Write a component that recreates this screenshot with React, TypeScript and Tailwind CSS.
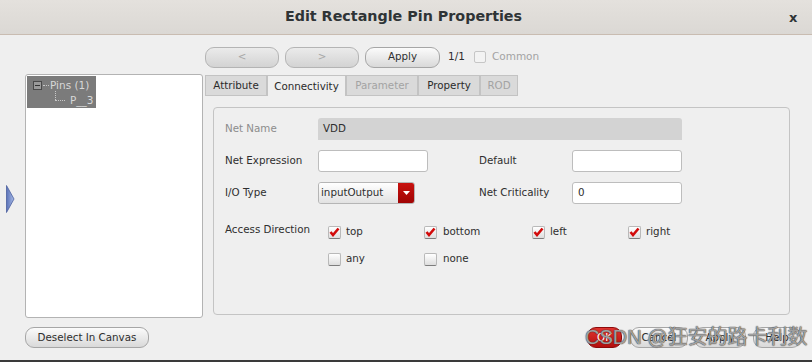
import React from 'react';

function Check({ checked }: { checked?: boolean }) {
    return (
        <span className="w-[13px] h-[13px] rounded-[2px] border border-[#b9b9b9] border-b-[#7d7d7d] bg-gradient-to-b from-[#ffffff] to-[#dedede] flex items-center justify-center shrink-0">
            {checked && (
                <svg width="11" height="10" viewBox="0 0 11 10">
                    <path d="M1.5 5 L4 8 L9.5 1.5" fill="none" stroke="#d20a0a" strokeWidth="2.6" strokeLinejoin="miter" />
                </svg>
            )}
        </span>
    );
}

function Btn({ label, w, disabled, red }: { label: string; w: string; disabled?: boolean; red?: boolean }) {
    return (
        <div
            className={`${w} h-[21px] rounded-[9px] border flex items-center justify-center shrink-0 ${
                red
                    ? 'bg-gradient-to-b from-[#e0332f] to-[#b40d0d] border-[#8d0a0a] text-white'
                    : disabled
                    ? 'bg-gradient-to-b from-[#ebebeb] to-[#d3d3d3] border-[#b4b4b4] text-[#a8a8a8]'
                    : 'bg-gradient-to-b from-[#fbfbfb] to-[#d9d9d9] border-[#a6a6a6] text-[#2e2e2e]'
            }`}
        >
            {label}
        </div>
    );
}

function Field({ w, value, gray }: { w: string; value?: string; gray?: boolean }) {
    return (
        <div
            className={`${w} h-[22px] flex items-center pl-[5px] shrink-0 ${
                gray ? 'bg-[#d3d3d3] rounded-t-[3px]' : 'bg-white border border-[#bdbdbd] rounded-[3px]'
            }`}
        >
            {value}
        </div>
    );
}

function Tab({ label, w, active, disabled }: { label: string; w: string; active?: boolean; disabled?: boolean }) {
    return (
        <div
            className={`${w} h-[21px] flex items-center justify-center pt-[1px] border border-[#c3c3c3] ${
                active ? 'bg-[#efefef] border-b-0' : 'bg-[#dadada]'
            } ${disabled ? 'text-[#a3a3a3]' : 'text-[#2a2a2a]'}`}
        >
            {label}
        </div>
    );
}

export default function App() {
    return (
        <div className="w-[812px] h-[362px] bg-[#efefef] flex flex-col overflow-hidden relative font-['DejaVu_Sans',sans-serif] text-[10.3px] text-[#2e2e2e]">
            {/* title bar */}
            <div className="h-[35px] shrink-0 bg-gradient-to-b from-[#e4e1dd] to-[#dbd8d4] border-b border-[#c9bcb1] flex items-center relative">
                <div className="flex-1 text-center text-[14.3px] font-bold text-[#2f3436] pr-[5px]">
                    Edit Rectangle Pin Properties
                </div>
                <div className="absolute left-[789px] top-[8px] text-[13px] font-bold text-[#2f3436]">x</div>
            </div>

            <div className="flex flex-1">
                {/* side handle */}
                <div className="w-[25px] shrink-0 pt-[150px] pl-[6px]">
                    <svg width="9" height="28" viewBox="0 0 9 28">
                        <defs>
                            <linearGradient id="tri" x1="0" x2="1" y1="0" y2="0">
                                <stop offset="0" stopColor="#5a72b8" />
                                <stop offset="1" stopColor="#a9bbe6" />
                            </linearGradient>
                        </defs>
                        <path d="M0.5 0.5 L8 14 L0.5 27.5 Z" fill="url(#tri)" stroke="#4b5f9e" strokeWidth="0.8" />
                    </svg>
                </div>

                {/* tree column */}
                <div className="w-[178px] shrink-0 pt-[39px] flex flex-col">
                    <div className="h-[244px] bg-white border border-[#b3b3b3] rounded-[3px] pt-[1px] pl-[1px]">
                        <div className="w-[69px] h-[32px] bg-[#7b7b7b] text-[#d8d8d8] relative">
                            <div className="absolute left-[6px] top-[5px] w-[9px] h-[9px] border border-[#4a4a4a] bg-[#9a9a9a] flex items-center justify-center">
                                <div className="w-[5px] h-[1px] bg-[#333]" />
                            </div>
                            <div className="absolute left-[16px] top-[9px] w-[6px] border-t border-dotted border-[#c8c8c8]" />
                            <div className="absolute left-[28px] top-[15px] h-[9px] border-l border-dotted border-[#c8c8c8]" />
                            <div className="absolute left-[28px] top-[24px] w-[10px] border-t border-dotted border-[#c8c8c8]" />
                            <div className="absolute left-[23px] top-[2px] text-[10.5px]">Pins (1)</div>
                            <div className="absolute left-[43px] top-[17px] text-[10.5px]">P__3</div>
                        </div>
                    </div>
                    <div className="mt-[9px]">
                        <Btn label="Deselect In Canvas" w="w-[124px]" />
                    </div>
                </div>

                {/* right column */}
                <div className="flex-1 flex flex-col pl-[2px] pt-[11px]">
                    <div className="h-[22px] flex items-center">
                        <Btn label="<" w="w-[74px]" disabled />
                        <div className="ml-[6px]">
                            <Btn label=">" w="w-[74px]" disabled />
                        </div>
                        <div className="ml-[6px]">
                            <Btn label="Apply" w="w-[75px]" />
                        </div>
                        <span className="ml-[8px] text-[10.5px]">1/1</span>
                        <span className="ml-[9px] w-[12px] h-[12px] border border-[#c6c6c6] rounded-[2px] bg-[#f3f3f3]" />
                        <span className="ml-[6px] text-[#a3a3a3] text-[10.5px]">Common</span>
                    </div>

                    <div className="mt-[7px] h-[21px] flex">
                        <Tab label="Attribute" w="w-[62px]" />
                        <Tab label="Connectivity" w="w-[79px]" active />
                        <Tab label="Parameter" w="w-[72px]" disabled />
                        <Tab label="Property" w="w-[62px]" />
                        <Tab label="ROD" w="w-[38px]" disabled />
                    </div>

                    {/* group box */}
                    <div className="mt-[11px] ml-[8px] w-[577px] h-[208px] border border-[#c4c4c4] rounded-[4px] pl-[11px] pt-[10px] flex flex-col">
                        <div className="flex items-center h-[21px]">
                            <span className="w-[93px] text-[#8c8c8c]">Net Name</span>
                            <Field w="w-[364px]" value="VDD" gray />
                        </div>
                        <div className="flex items-center mt-[11px]">
                            <span className="w-[93px]">Net Expression</span>
                            <Field w="w-[110px]" />
                            <span className="ml-[51px] w-[93px]">Default</span>
                            <Field w="w-[110px]" />
                        </div>
                        <div className="flex items-center mt-[10px]">
                            <span className="w-[93px]">I/O Type</span>
                            <div className="w-[97px] h-[22px] flex border border-[#b5b5b5] rounded-[3px] overflow-hidden shrink-0">
                                <div className="flex-1 bg-gradient-to-b from-[#ffffff] to-[#e2e2e2] flex items-center pl-[2px]">
                                    inputOutput
                                </div>
                                <div className="w-[16px] bg-gradient-to-b from-[#c8120f] to-[#a00404] flex items-center justify-center">
                                    <svg width="7" height="4" viewBox="0 0 7 4">
                                        <path d="M0 0 L7 0 L3.5 4 Z" fill="#ffffff" />
                                    </svg>
                                </div>
                            </div>
                            <span className="ml-[64px] w-[93px]">Net Criticality</span>
                            <Field w="w-[110px]" value="0" />
                        </div>
                        <div className="flex mt-[19px]">
                            <span className="w-[103px] leading-[12px]">Access Direction</span>
                            <div className="flex flex-col pt-[2px]">
                                <div className="flex h-[14px] items-center">
                                    <div className="w-[96px] flex items-center gap-[5px]">
                                        <Check checked />
                                        <span>top</span>
                                    </div>
                                    <div className="w-[108px] flex items-center gap-[6px]">
                                        <Check checked />
                                        <span>bottom</span>
                                    </div>
                                    <div className="w-[96px] flex items-center gap-[5px]">
                                        <Check checked />
                                        <span>left</span>
                                    </div>
                                    <div className="flex items-center gap-[5px]">
                                        <Check checked />
                                        <span>right</span>
                                    </div>
                                </div>
                                <div className="flex h-[14px] items-center mt-[13px]">
                                    <div className="w-[96px] flex items-center gap-[5px]">
                                        <Check />
                                        <span>any</span>
                                    </div>
                                    <div className="flex items-center gap-[6px]">
                                        <Check />
                                        <span>none</span>
                                    </div>
                                </div>
                            </div>
                        </div>
                    </div>

                    {/* bottom buttons */}
                    <div className="mt-[12px] flex pl-[382px] relative">
                        <Btn label="OK" w="w-[35px]" red />
                        <div className="ml-[8px]">
                            <Btn label="Cancel" w="w-[58px]" />
                        </div>
                        <div className="ml-[6px]">
                            <Btn label="Apply" w="w-[52px]" />
                        </div>
                        <div className="ml-[7px]">
                            <Btn label="Help" w="w-[48px]" />
                        </div>
                        <div className="absolute left-[380px] top-[-2px] text-[20px] leading-[24px] text-[rgba(255,255,255,0.55)] font-['Liberation_Sans','Noto_Sans_CJK_SC',sans-serif] [text-shadow:0_0_1px_#333,0_0_1px_#333] whitespace-nowrap">
                            CSDN @狂安的路卡利数
                        </div>
                    </div>
                </div>
            </div>
            <div className="h-[2px] bg-[#3a3a3a] shrink-0" />
        </div>
    );
}
